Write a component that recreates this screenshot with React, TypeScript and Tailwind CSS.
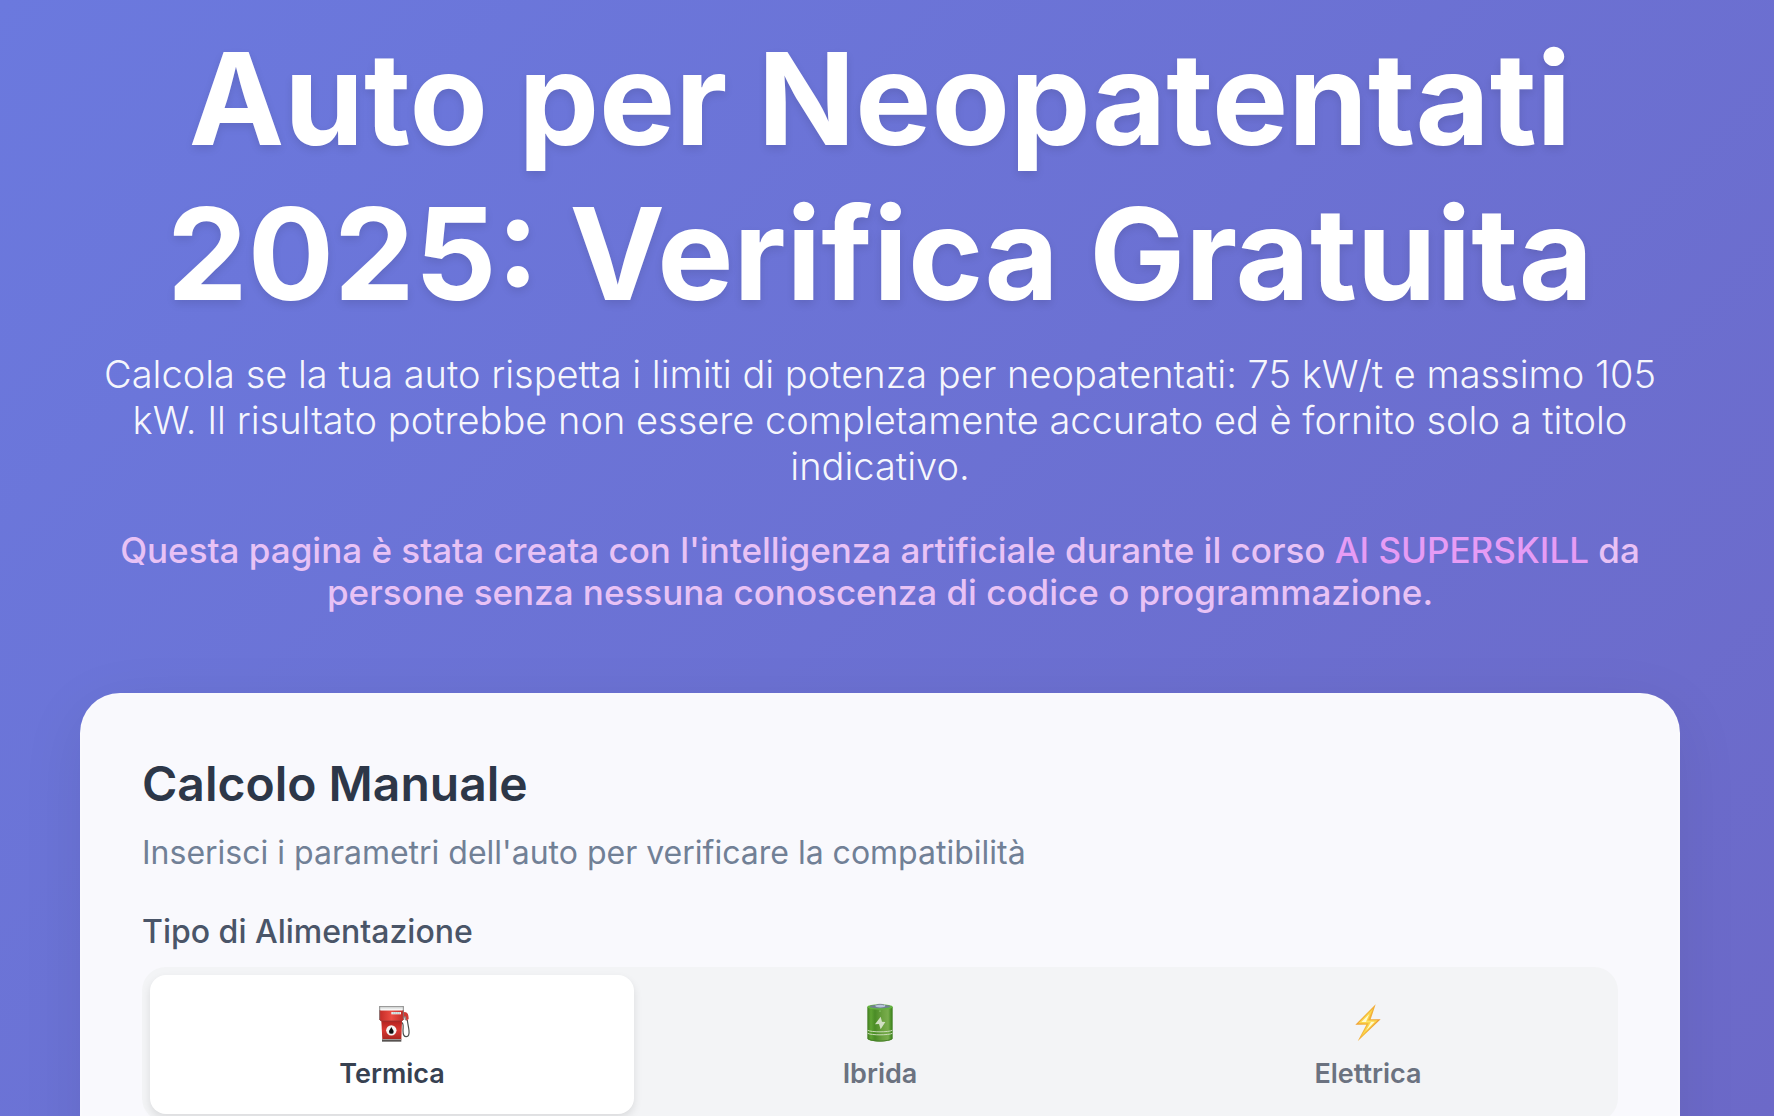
import { useState } from "react";
import type { ReactNode } from "react";

type FuelType = "termica" | "ibrida" | "elettrica";

type FuelTab = {
  readonly id: FuelType;
  readonly label: string;
  readonly icon: ReactNode;
};

function FuelPumpIcon() {
  return (
    <svg viewBox="66 57 120 120" className="size-10" aria-hidden="true">
      <defs>
        <linearGradient id="pump-head" x1="0" x2="1" y1="0" y2="0">
          <stop offset="0" stopColor="#c32b27" />
          <stop offset="0.5" stopColor="#ec4d43" />
          <stop offset="1" stopColor="#c02a26" />
        </linearGradient>
        <linearGradient id="pump-body" x1="0" x2="0" y1="0" y2="1">
          <stop offset="0" stopColor="#b3231f" />
          <stop offset="0.5" stopColor="#d93831" />
          <stop offset="1" stopColor="#a8261f" />
        </linearGradient>
      </defs>
      <path
        d="M155 116c7 2 4 12 4 24 0 10 4 18 10 18 7 0 9-8 8-18-1-11-4-20-5-32"
        fill="none"
        stroke="#4b4f4e"
        strokeWidth="3.5"
      />
      <path d="M160 84l8 1c5 2 8 8 8 20l-7 5-6-10-3-2z" fill="#cf3a35" />
      <path d="M163 96l5 2 1 12-5-3z" fill="#8d8f8f" />
      <path d="M94 110h62l-2 57H97z" fill="url(#pump-body)" />
      <path d="M96 166h58v7H96z" fill="#575351" />
      <path d="M97 165h56v3H97z" fill="#9d9795" />
      <path d="M88 78h73v28l-5 5H92l-4-5z" fill="url(#pump-head)" />
      <path d="M89 106l4 5h63l5-5" fill="none" stroke="#8c3a38" strokeWidth="2" />
      <path d="M89 67h71v12H89z" fill="#e6e8e7" />
      <path d="M88 68h73M89 67v40M160 67v38" fill="none" stroke="#777777" strokeWidth="2.5" />
      <path d="M92 76h65v3H92z" fill="#ffffff" />
      <path d="M124 84h29v7h-29z" fill="#f0f2f2" />
      <path d="M128 87h22" stroke="#85afa9" strokeWidth="2.5" strokeDasharray="5 1" />
      <circle cx="124" cy="139" r="15.5" fill="#f6f6f4" />
      <path d="M124 129c2 6 7 9 7 14a7 6.500 0 0 1-14 0c0-5 5-8 7-14z" fill="#111111" />
    </svg>
  );
}

function BatteryIcon() {
  return (
    <svg viewBox="60 57 120 120" className="size-10" aria-hidden="true">
      <defs>
        <linearGradient id="battery-body" x1="0" x2="1" y1="0" y2="0">
          <stop offset="0" stopColor="#3f7a1f" />
          <stop offset="0.14" stopColor="#5fa433" />
          <stop offset="0.3" stopColor="#4a8c26" />
          <stop offset="0.6" stopColor="#6ba23f" />
          <stop offset="0.82" stopColor="#79ad4d" />
          <stop offset="0.93" stopColor="#4c9128" />
          <stop offset="1" stopColor="#387a1b" />
        </linearGradient>
      </defs>
      <path d="M82 69v94c0 13 76 13 76 0V69z" fill="url(#battery-body)" />
      <ellipse cx="120" cy="69" rx="38" ry="8" fill="#64b53e" />
      <ellipse cx="120" cy="67.500" rx="31" ry="5.500" fill="#718191" />
      <ellipse cx="121" cy="65.500" rx="15" ry="5" fill="#b8c5dc" />
      <path d="M109 63c4-3 18-3 23 0" stroke="#6c7185" strokeWidth="2" fill="none" />
      <path d="M120 79v5" stroke="#8bc96d" strokeWidth="3" />
      <path d="M122 98l4 15 10 1-14 22-5-16-12 1z" fill="#d1dfc3" />
      <path d="M83 139c12 6 62 6 74 0M83 148c12 6 62 6 74 0" fill="none" stroke="#cbdcb8" strokeWidth="3" />
      <path d="M83 163c10 11 64 11 74 0" fill="none" stroke="#477f2a" strokeWidth="3" />
    </svg>
  );
}

function BoltIcon() {
  return (
    <svg viewBox="69 57 120 120" className="size-10" aria-hidden="true">
      <defs>
        <linearGradient id="bolt-edge" x1="0" x2="1" y1="0" y2="0.3">
          <stop offset="0" stopColor="#ee9430" />
          <stop offset="0.5" stopColor="#f4b83c" />
          <stop offset="1" stopColor="#ed9d35" />
        </linearGradient>
      </defs>
      <path d="M152 61L91 122h33L98 172l69-66h-30z" fill="url(#bolt-edge)" />
      <path d="M144 74l-44 44h31l-22 39 49-48h-29z" fill="#fbd84c" />
      <path d="M133 90l-24 24h29l-15 26 26-27h-26z" fill="#fffbd0" />
    </svg>
  );
}

const fuelTabs: readonly FuelTab[] = [
  { id: "termica", label: "Termica", icon: <FuelPumpIcon /> },
  { id: "ibrida", label: "Ibrida", icon: <BatteryIcon /> },
  { id: "elettrica", label: "Elettrica", icon: <BoltIcon /> },
];

function PageHeader() {
  return (
    <header className="text-center">
      <h1 className="text-[128px] leading-[155px] font-bold text-white [text-shadow:0_4px_8px_rgba(0,0,0,0.1)]">
        Auto per Neopatentati 2025: Verifica Gratuita
      </h1>
      <p className="mt-5 text-[38px] leading-[46px] font-light text-white/95">
        Calcola se la tua auto rispetta i limiti di potenza per neopatentati: 75 kW/t e massimo 105
        kW. Il risultato potrebbe non essere completamente accurato ed è fornito solo a titolo
        indicativo.
      </p>
      <p className="mt-10 text-[35px] leading-[42px] font-medium text-[#e8c2f5]">
        Questa pagina è stata creata con l'intelligenza artificiale durante il corso{" "}
        <a href="#ai-superskill" className="text-[#e69cf5]">
          AI SUPERSKILL
        </a>{" "}
        da persone senza nessuna conoscenza di codice o programmazione.
      </p>
    </header>
  );
}

type FuelTabsProps = {
  readonly selected: FuelType;
  readonly onSelect: (fuel: FuelType) => void;
};

function FuelTabs({ selected, onSelect }: FuelTabsProps) {
  return (
    <div
      role="tablist"
      aria-labelledby="fuel-type-label"
      className="mt-4 grid grid-cols-3 gap-1 rounded-3xl bg-[#f3f4f6] p-2"
    >
      {fuelTabs.map((tab) => {
        const isSelected = tab.id === selected;

        return (
          <button
            key={tab.id}
            type="button"
            role="tab"
            aria-selected={isSelected}
            onClick={() => onSelect(tab.id)}
            className={[
              "flex flex-col items-center gap-2.5 rounded-2xl py-6 text-[27px] leading-[33px] font-semibold",
              isSelected
                ? "bg-white text-[#374151] shadow-[0_4px_8px_rgba(0,0,0,0.1)]"
                : "text-[#6b7280]",
            ].join(" ")}
          >
            <span className="flex h-12 items-center">{tab.icon}</span>
            <span>{tab.label}</span>
          </button>
        );
      })}
    </div>
  );
}

export default function App() {
  const [fuel, setFuel] = useState<FuelType>("termica");

  return (
    <div className="h-screen overflow-hidden bg-[linear-gradient(135deg,#6b79de,#6c69c8)] pt-[21px] pr-[14px] font-['Inter',sans-serif]">
      <main className="mx-auto max-w-[1600px]">
        <PageHeader />

        <section className="mt-20 rounded-[40px] border-2 border-white/20 bg-[#f9f9fd] p-[60px] shadow-[0_16px_64px_rgba(0,0,0,0.08)]">
          <h2 className="text-5xl leading-[58px] font-semibold text-[#2d3748]">Calcolo Manuale</h2>
          <p className="mt-5 text-[32px] leading-[39px] text-[#718096]">
            Inserisci i parametri dell'auto per verificare la compatibilità
          </p>

          <p
            id="fuel-type-label"
            className="mt-10 text-[32px] leading-[39px] font-medium text-[#4a5568]"
          >
            Tipo di Alimentazione
          </p>
          <FuelTabs selected={fuel} onSelect={setFuel} />
        </section>
      </main>
    </div>
  );
}
